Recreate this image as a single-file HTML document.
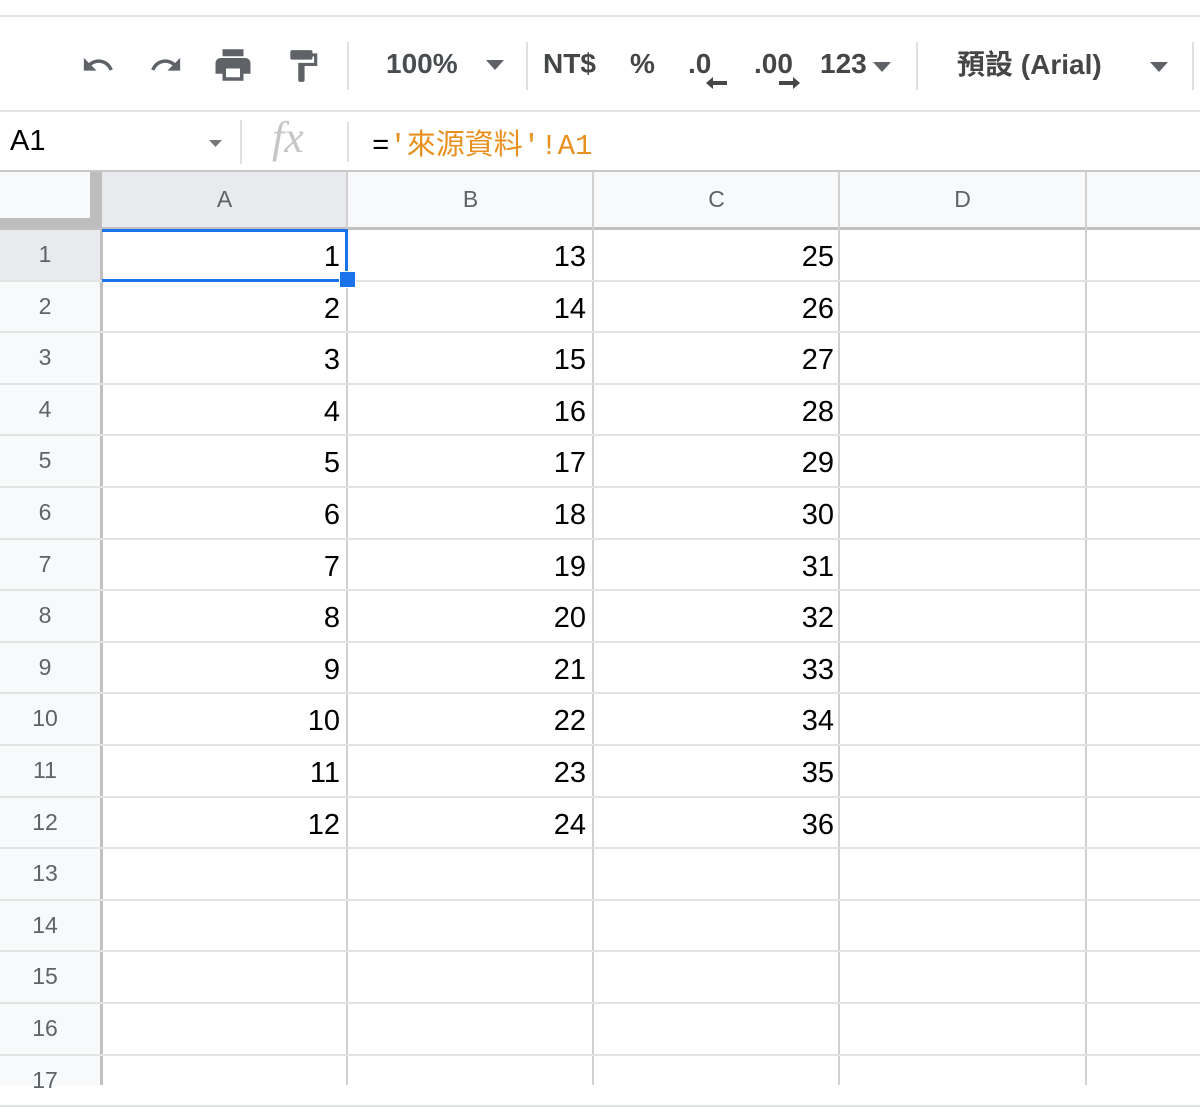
<!DOCTYPE html>
<html><head><meta charset="utf-8"><style>
body{margin:0;width:1200px;height:1085px;overflow:hidden;background:#fff;font-family:"Liberation Sans","Noto Sans CJK TC",sans-serif;position:relative}
.a{position:absolute}
.tb{color:#444746;font-size:28px;top:48px}
.sep{position:absolute;width:2px;background:#e0e0e0}
.hl{position:absolute;left:0;width:1200px;height:2px;background:#e2e3e3}
.vl{position:absolute;top:171px;bottom:0;width:2px;background:#e2e3e3}
.rn{position:absolute;left:0;width:90px;text-align:center;color:#5f6368;font-size:23px}
.n{position:absolute;font-size:29px;color:#000;text-align:right}
</style></head><body>
<div class="a" style="top:15px;left:0;width:1200px;height:2px;background:#e4e4e4"></div>
<svg class="a" style="left:76px;top:48px" width="44" height="34" viewBox="0 0 24 24"><path fill="#5f6368" d="M12.5 8c-2.65 0-5.05 1-6.9 2.6L2 7v9h9l-3.62-3.62c1.39-1.160 3.16-1.88 5.12-1.88 3.54 0 6.55 2.31 7.6 5.5l2.37-.78C21.08 11.03 17.15 8 12.5 8z"/></svg>
<svg class="a" style="left:144px;top:48px" width="44" height="34" viewBox="0 0 24 24"><path fill="#5f6368" d="M18.4 10.6C16.55 9 14.150 8 11.5 8c-4.65 0-8.58 3.03-9.96 7.22L3.9 16c1.05-3.19 4.05-5.5 7.6-5.5 1.95 0 3.73.72 5.12 1.88L13 16h9V7l-3.6 3.6z"/></svg>
<svg class="a" style="left:210px;top:44px" width="46" height="42" viewBox="0 0 24 24"><path fill="#5f6368" d="M19 8H5c-1.66 0-3 1.34-3 3v6h4v4h12v-4h4v-6c0-1.66-1.34-3-3-3zm-3 11H8v-5h8v5zM18 3H6v4h12V3z"/></svg>
<svg class="a" style="left:284px;top:46px" width="38" height="40" viewBox="0 0 24 24"><path fill="#5f6368" d="M18 4V3c0-.55-.45-1-1-1H5c-.55 0-1 .45-1 1v4c0 .55.45 1 1 1h12c.55 0 1-.45 1-1V6h1v4H9v11c0 .55.45 1 1 1h2c.55 0 1-.45 1-1v-9h8V4h-3z"/></svg>
<div class="sep" style="left:347px;top:42px;height:48px"></div>
<div class="a tb" style="left:386px;font-weight:bold;color:#4a4d50">100%</div>
<svg class="a" style="left:486px;top:60px" width="20" height="12"><path d="M0 0h18L9 10z" fill="#5f6368"/></svg>
<div class="sep" style="left:526px;top:42px;height:48px"></div>
<div class="a tb" style="left:543px;font-weight:bold">NT$</div>
<div class="a tb" style="left:630px;font-weight:bold">%</div>
<div class="a tb" style="left:688px;font-weight:bold">.0</div>
<svg class="a" style="left:706px;top:76px" width="22" height="14"><path d="M0 7l7-6v4h14v4H7v4z" fill="#444746"/></svg>
<div class="a tb" style="left:754px;font-weight:bold">.00</div>
<svg class="a" style="left:778px;top:76px" width="22" height="14"><path d="M22 7l-7-6v4H1v4h14v4z" fill="#444746"/></svg>
<div class="a tb" style="left:820px;font-weight:bold">123</div>
<svg class="a" style="left:873px;top:62px" width="20" height="12"><path d="M0 0h18L9 10z" fill="#5f6368"/></svg>
<div class="sep" style="left:916px;top:42px;height:48px"></div>
<div class="a tb" style="left:957px;top:43px;font-weight:bold">預設 (Arial)</div>
<svg class="a" style="left:1150px;top:62px" width="20" height="12"><path d="M0 0h18L9 10z" fill="#5f6368"/></svg>
<div class="sep" style="left:1192px;top:42px;height:48px"></div>
<div class="a" style="top:110px;left:0;width:1200px;height:2px;background:#e2e2e2"></div>
<div class="a" style="left:10px;top:125px;font-size:29px;color:#000">A1</div>
<svg class="a" style="left:209px;top:140px" width="14" height="9"><path d="M0 0h13L6.5 7z" fill="#777"/></svg>
<div class="sep" style="left:240px;top:120px;height:44px"></div>
<div class="a" style="left:272px;top:112px;font-family:'Liberation Serif',serif;font-style:italic;font-size:44px;color:#c6c6c6">fx</div>
<div class="sep" style="left:347px;top:122px;height:40px"></div>
<div class="a" style="left:372px;top:121px;font-size:29px;color:#000;font-family:'Liberation Mono','Noto Sans CJK TC',monospace">=<span style="color:#e8901f">'來源資料'!A1</span></div>
<div class="a" style="top:170px;left:0;width:1200px;height:2px;background:#c7c7c7"></div>
<div class="a" style="top:172px;left:0;width:1200px;height:56px;background:#f8f9fa"></div>
<div class="a" style="top:172px;left:102px;width:245px;height:56px;background:#e8eaed"></div>
<div class="a" style="top:229px;left:0;width:100px;height:51px;background:#e8eaed"></div>
<div class="a" style="top:172px;left:90px;width:12px;height:56px;background:#bdbdbd"></div>
<div class="a" style="top:218px;left:0;width:102px;height:10px;background:#bdbdbd"></div>
<div class="a" style="top:227px;left:0;width:1200px;height:3px;background:#c0c0c0"></div>
<div class="a" style="top:229px;left:0;width:100px;bottom:0;background:#f8f9fa;z-index:-1"></div>
<div class="a" style="top:229px;left:100px;width:3px;bottom:0;background:#c0c0c0"></div>
<div class="a" style="top:186px;left:102px;width:245px;text-align:center;color:#5f6368;font-size:23px">A</div>
<div class="a" style="top:186px;left:348px;width:245px;text-align:center;color:#5f6368;font-size:23px">B</div>
<div class="a" style="top:186px;left:594px;width:245px;text-align:center;color:#5f6368;font-size:23px">C</div>
<div class="a" style="top:186px;left:840px;width:245px;text-align:center;color:#5f6368;font-size:23px">D</div>
<div class="vl" style="left:346px;background:#d0d0d0"></div>
<div class="vl" style="left:592px;background:#d0d0d0"></div>
<div class="vl" style="left:838px;background:#d0d0d0"></div>
<div class="vl" style="left:1085px;background:#d0d0d0"></div>
<div id="rows"></div>
<div class="a" style="left:102px;top:229px;width:246px;height:53px;border:3px solid #1a73e8;border-left:none;box-sizing:border-box"></div>
<div class="a" style="left:339px;top:271px;width:15px;height:15px;background:#1a73e8;border:1px solid #fff"></div>
<script>
var h='';
for(var i=1;i<=17;i++){var t=228+(i-1)*51.6;
h+='<div class="hl" style="top:'+(t+51.6).toFixed(1)+'px"></div>';
h+='<div class="rn" style="top:'+(t+13).toFixed(1)+'px">'+i+'</div>';
if(i<=12){h+='<div class="n" style="left:102px;width:238px;top:'+(t+13).toFixed(1)+'px">'+i+'</div>';
h+='<div class="n" style="left:348px;width:238px;top:'+(t+13).toFixed(1)+'px">'+(i+12)+'</div>';
h+='<div class="n" style="left:594px;width:240px;top:'+(t+13).toFixed(1)+'px">'+(i+24)+'</div>';}}
document.getElementById('rows').innerHTML=h;
</script>
</body></html>
